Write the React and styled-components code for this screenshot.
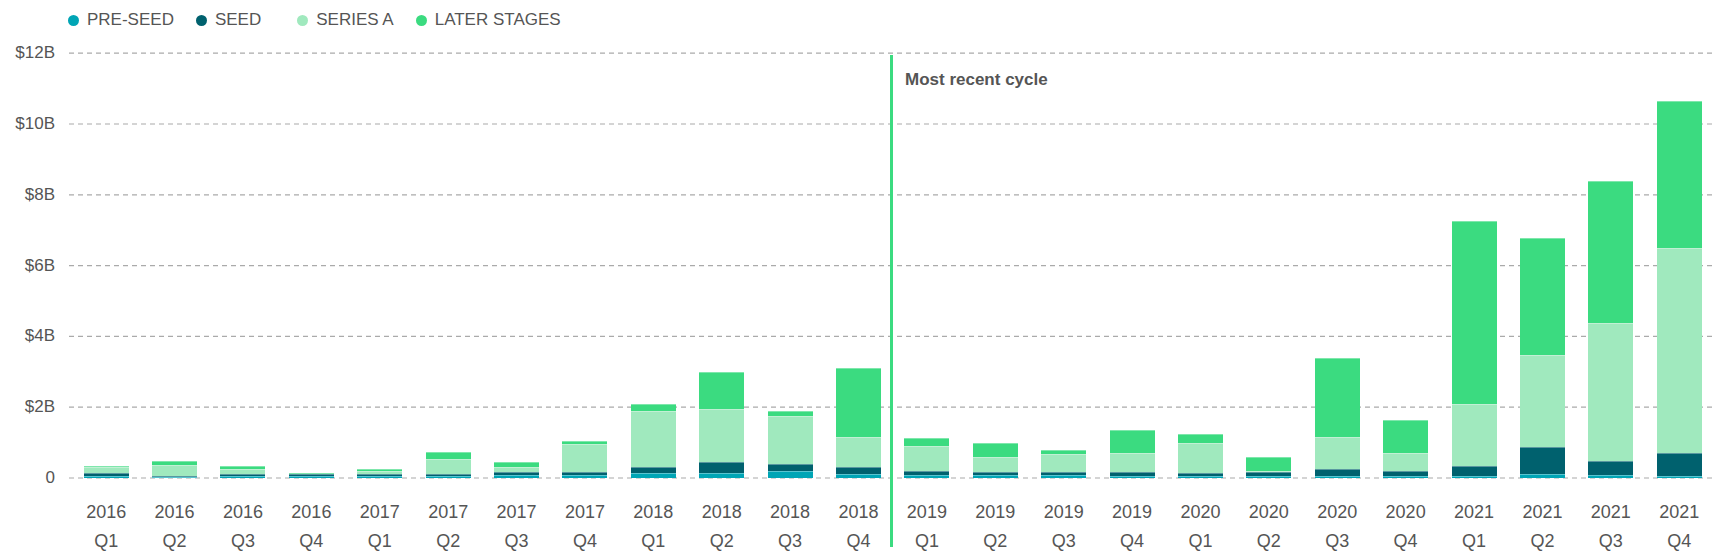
import React from "react";
import styled, { createGlobalStyle } from "styled-components";

const Global = createGlobalStyle`
  html, body { margin: 0; padding: 0; background: #fff; }
  body { font-family: "Liberation Sans", Arial, sans-serif; color: #555; }
`;

const C = { pre: "#00a5b5", seed: "#00616e", a: "#a0e9be", later: "#3bdb80" };
const PX = 35.4;
const PLOT_H = 425;

const data = [
  ["2016","Q1",[0.05,0.1,0.15,0.05]],["2016","Q2",[0.02,0.03,0.33,0.1]],
  ["2016","Q3",[0.05,0.05,0.15,0.1]],["2016","Q4",[0.05,0.05,0.02,0.02]],
  ["2017","Q1",[0.05,0.05,0.1,0.05]],["2017","Q2",[0.05,0.05,0.45,0.18]],
  ["2017","Q3",[0.08,0.08,0.15,0.15]],["2017","Q4",[0.08,0.08,0.8,0.1]],
  ["2018","Q1",[0.15,0.15,1.6,0.18]],["2018","Q2",[0.15,0.3,1.5,1.05]],
  ["2018","Q3",[0.2,0.2,1.35,0.15]],["2018","Q4",[0.1,0.2,0.85,1.95]],
  ["2019","Q1",[0.08,0.12,0.7,0.22]],["2019","Q2",[0.08,0.1,0.4,0.4]],
  ["2019","Q3",[0.08,0.1,0.5,0.1]],["2019","Q4",[0.06,0.1,0.55,0.65]],
  ["2020","Q1",[0.05,0.1,0.85,0.25]],["2020","Q2",[0.05,0.12,0.03,0.4]],
  ["2020","Q3",[0.05,0.2,0.9,2.25]],["2020","Q4",[0.05,0.15,0.5,0.95]],
  ["2021","Q1",[0.05,0.3,1.75,5.15]],["2021","Q2",[0.12,0.75,2.6,3.3]],
  ["2021","Q3",[0.08,0.4,3.9,4.0]],["2021","Q4",[0.05,0.65,5.8,4.15]],
];
const colors = [C.pre, C.seed, C.a, C.later];

const Page = styled.div`
  width: 1732px; height: 558px; position: relative; overflow: hidden;
`;
const Legend = styled.div`
  display: flex; align-items: center; gap: 22px;
  padding: 8px 0 0 68px; height: 24px; font-size: 17px; color: #555;
`;
const LegendItem = styled.div`
  display: flex; align-items: center; gap: 8px; margin-right: ${p => p.$extra || 0}px;
`;
const Dot = styled.span`
  width: 11px; height: 11px; border-radius: 50%; background: ${p => p.$c};
`;
const ChartRow = styled.div`
  display: flex; margin-top: 21px;
`;
const YAxis = styled.div`
  position: relative; width: 55px; height: ${PLOT_H}px; margin-right: 14px;
`;
const YLabel = styled.div`
  position: absolute; right: 0; transform: translateY(-50%);
  font-size: 17px; color: #555; white-space: nowrap;
`;
const PlotCol = styled.div`
  display: flex; flex-direction: column; width: 1645px;
`;
const Plot = styled.div`
  position: relative; height: ${PLOT_H}px;
  display: flex; align-items: flex-end; padding-left: 3px;
`;
const Grid = styled.svg`
  position: absolute; inset: 0; width: 100%; height: 100%; overflow: visible;
`;
const Slot = styled.div`
  position: relative; width: 68.4px; display: flex; justify-content: center; height: 100%; align-items: flex-end;
`;
const Bar = styled.div`
  width: 45px; display: flex; flex-direction: column-reverse;
`;
const Seg = styled.div`
  background: ${p => p.$c}; box-shadow: inset 0 1px 0 rgba(255,255,255,0.35);
`;
const XLabels = styled.div`
  display: flex; padding-left: 3px; margin-top: 20px;
`;
const XLabel = styled.div`
  width: 68.4px; text-align: center; font-size: 18px; line-height: 29px; color: #555;
`;
const Divider = styled.div`
  position: absolute; left: 890px; top: 55px; width: 3px; height: 492px; background: ${C.later};
`;
const Note = styled.div`
  position: absolute; left: 905px; top: 70px; font-size: 17px; font-weight: bold; color: #555;
`;

export default function App() {
  const ticks = [0, 2, 4, 6, 8, 10, 12];
  return (
    <Page>
      <Global />
      <Legend>
        <LegendItem><Dot $c={C.pre} />PRE-SEED</LegendItem>
        <LegendItem $extra={14}><Dot $c={C.seed} />SEED</LegendItem>
        <LegendItem><Dot $c={C.a} />SERIES A</LegendItem>
        <LegendItem><Dot $c={C.later} />LATER STAGES</LegendItem>
      </Legend>
      <ChartRow>
        <YAxis>
          {ticks.map(t => (
            <YLabel key={t} style={{ top: PLOT_H - t * PX }}>{t === 0 ? "0" : `$${t}B`}</YLabel>
          ))}
        </YAxis>
        <PlotCol>
          <Plot>
            <Grid>
              {ticks.map(t => (
                <line key={t} x1="0" x2="1643" y1={PLOT_H - t * PX} y2={PLOT_H - t * PX}
                  stroke="#aaa" strokeWidth="1.2" strokeDasharray="5 4" />
              ))}
            </Grid>
            {data.map(([y, q, v]) => (
              <Slot key={y + q}>
                <Bar>
                  {v.map((val, i) => <Seg key={i} $c={colors[i]} style={{ height: val * PX }} />)}
                </Bar>
              </Slot>
            ))}
          </Plot>
          <XLabels>
            {data.map(([y, q]) => <XLabel key={y + q}>{y}<br />{q}</XLabel>)}
          </XLabels>
        </PlotCol>
      </ChartRow>
      <Divider />
      <Note>Most recent cycle</Note>
    </Page>
  );
}
